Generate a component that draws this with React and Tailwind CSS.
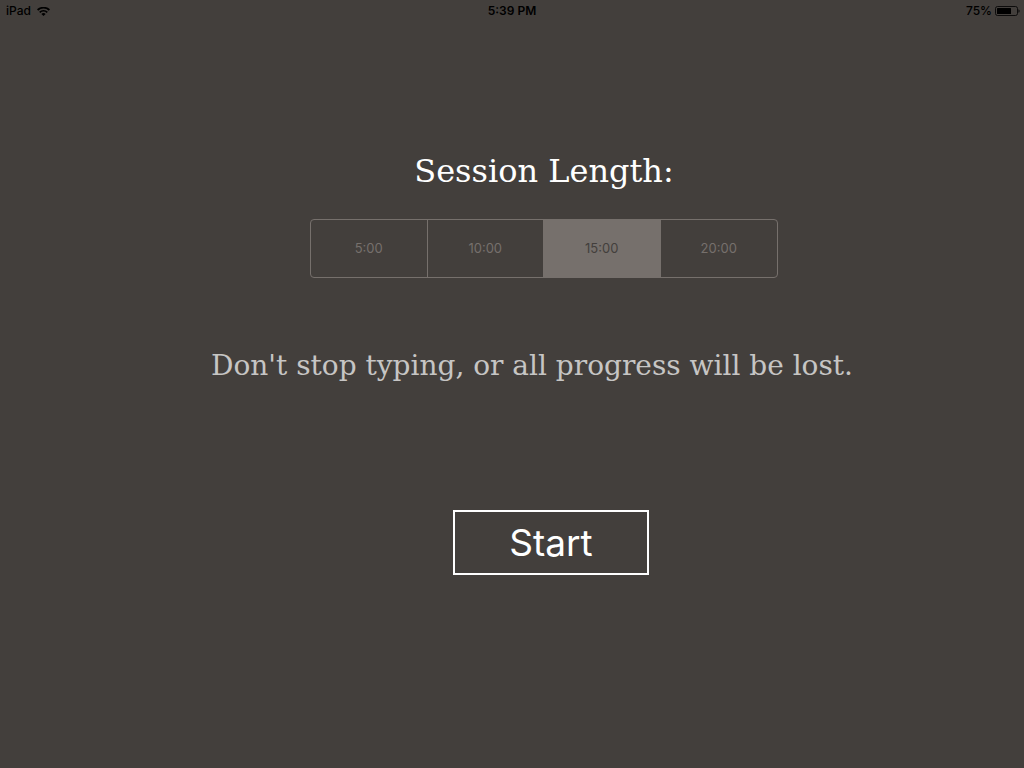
import { useState } from "react";

const LENGTHS = ["5:00", "10:00", "15:00", "20:00"];

function WifiIcon() {
  return (
    <svg className="h-[9px] w-[13px]" viewBox="0 0 13 9" fill="none" stroke="currentColor" aria-hidden="true">
      <path d="M0.6 3C4 -0.1 9 -0.1 12.4 3" strokeWidth="1.8" />
      <path d="M2.7 5.3C4.9 3.3 8.1 3.3 10.3 5.3" strokeWidth="1.7" />
      <path d="M6.5 9L4.4 6.9C5.6 5.8 7.4 5.8 8.6 6.9Z" fill="currentColor" stroke="none" />
    </svg>
  );
}

function BatteryIcon() {
  return (
    <svg className="h-[10px] w-[25px]" viewBox="0 0 25 10" fill="none" aria-hidden="true">
      <rect x="0.5" y="0.5" width="22" height="9" rx="2" stroke="currentColor" strokeOpacity="0.8" />
      <rect x="2" y="2" width="14" height="6" rx="0.5" fill="currentColor" />
      <path d="M23.5 3.2C24.9 3.6 24.9 6.4 23.5 6.8Z" fill="currentColor" />
    </svg>
  );
}

function StatusBar() {
  return (
    <header className="grid h-5 grid-cols-3 items-center px-1.5 pt-0.5 text-xs font-semibold text-black">
      <div className="flex items-center gap-1.5 font-medium">
        <span>iPad</span>
        <WifiIcon />
      </div>
      <time className="text-center">5:39 PM</time>
      <div className="-mr-0.5 flex items-center justify-end gap-[3px] pb-px font-medium">
        <span>75%</span>
        <BatteryIcon />
      </div>
    </header>
  );
}

export default function App() {
  const [selected, setSelected] = useState("15:00");

  return (
    <div className="flex min-h-screen flex-col bg-[#433f3c] font-['Inter',sans-serif] text-white">
      <StatusBar />
      <main className="flex flex-1 flex-col pt-[127px]">
        <section className="flex flex-col items-center pl-16">
          <h1
            id="session-length"
            className="font-['DejaVu_Serif',serif] text-[32px] leading-12 font-normal"
          >
            Session Length:
          </h1>
          <div
            role="radiogroup"
            aria-labelledby="session-length"
            className="mt-6 grid w-full max-w-[468px] grid-cols-4 divide-x divide-[#76706c] overflow-hidden rounded border border-[#76706c]"
          >
            {LENGTHS.map((length) => (
              <label
                key={length}
                className="flex h-[57px] cursor-pointer items-center justify-center text-[13px] text-[#76706c] has-checked:bg-[#76706c] has-checked:text-[#433f3c]"
              >
                <input
                  type="radio"
                  name="length"
                  value={length}
                  checked={selected === length}
                  onChange={() => setSelected(length)}
                  className="sr-only"
                />
                {length}
              </label>
            ))}
          </div>
        </section>
        <p className="mt-16 pl-10 text-center font-['DejaVu_Serif',serif] text-[28px] leading-12 text-[#c6c5c4]">
          Don't stop typing, or all progress will be lost.
        </p>
        <div className="mt-30 flex justify-center pl-[78px]">
          <button type="button" className="h-[65px] w-[196px] border-2 border-white text-[37px] leading-none">
            Start
          </button>
        </div>
      </main>
    </div>
  );
}
